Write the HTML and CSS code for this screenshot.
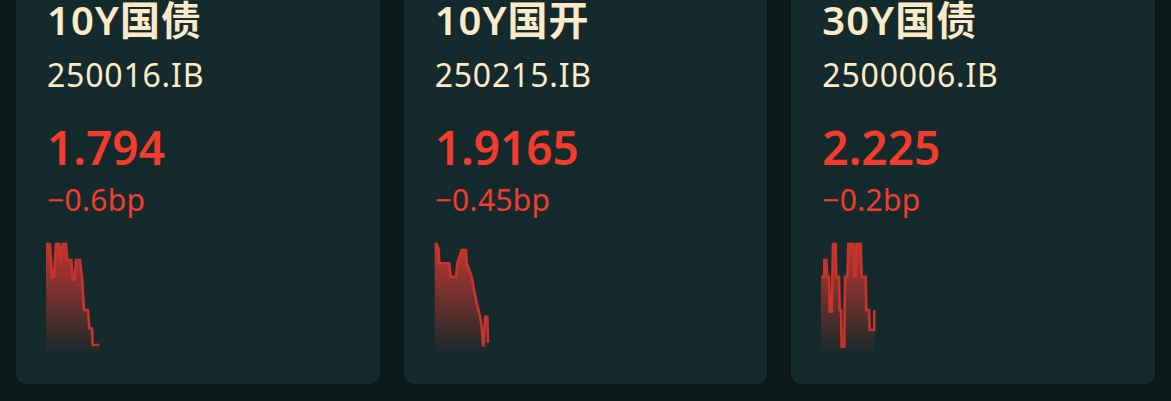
FILE: index.html
```html
<!DOCTYPE html>
<html lang="zh-CN">
<head>
    <meta charset="UTF-8">
    <meta name="viewport" content="width=device-width, initial-scale=1.0">
    <title>国债收益率</title>
    <link rel="stylesheet" href="styles.css">
</head>
<body>
    <div class="cards">
        <div class="card">
            <div class="bond-name">10Y国债</div>
            <div class="bond-code">250016.IB</div>
            <div class="bond-yield">1.794</div>
            <div class="bond-change">−0.6bp</div>
            <svg class="spark" width="56" height="115" viewBox="0 0 56 115">
                <defs>
                    <linearGradient id="fill1" x1="0" y1="0" x2="0" y2="1">
                        <stop offset="0" stop-color="#cc362d" stop-opacity="0.95"/>
                        <stop offset="1" stop-color="#cc362d" stop-opacity="0"/>
                    </linearGradient>
                </defs>
                <path fill="url(#fill1)" d="M0,115 L0,3 4,3 6,36 8,36 10,3 13.3,3 14.7,21 16.7,3 20,3 21.3,19 25.3,19 26.7,38.5 28.7,38.5 30,19 34,19 36,36 38,69 42,69 43.3,87.5 46,87.5 46.7,104 53.3,104 53.3,115 Z"/>
                <polyline class="spark-line" points="0,3 4,3 6,36 8,36 10,3 13.3,3 14.7,21 16.7,3 20,3 21.3,19 25.3,19 26.7,38.5 28.7,38.5 30,19 34,19 36,36 38,69 42,69 43.3,87.5 46,87.5 46.7,104 53.3,104"/>
            </svg>
        </div>

        <div class="card">
            <div class="bond-name">10Y国开</div>
            <div class="bond-code">250215.IB</div>
            <div class="bond-yield">1.9165</div>
            <div class="bond-change">−0.45bp</div>
            <svg class="spark" width="56" height="115" viewBox="0 0 56 115">
                <defs>
                    <linearGradient id="fill2" x1="0" y1="0" x2="0" y2="1">
                        <stop offset="0" stop-color="#cc362d" stop-opacity="0.95"/>
                        <stop offset="1" stop-color="#cc362d" stop-opacity="0"/>
                    </linearGradient>
                </defs>
                <path fill="url(#fill2)" d="M0.7,115 L0.7,3 2.7,3 4.7,9 5.3,22.3 15.3,22.3 16.7,35.7 22,35.7 23.3,22.3 27.7,9 32,9 32.7,22.3 35.3,29 37.7,35.7 40,49 42.7,62.3 46,75.7 47.7,85.7 49.3,105.7 51.3,75.7 53.3,75.7 54,102 54,115 Z"/>
                <polyline class="spark-line" points="0.7,3 2.7,3 4.7,9 5.3,22.3 15.3,22.3 16.7,35.7 22,35.7 23.3,22.3 27.7,9 32,9 32.7,22.3 35.3,29 37.7,35.7 40,49 42.7,62.3 46,75.7 47.7,85.7 49.3,105.7 51.3,75.7 53.3,75.7 54,102"/>
            </svg>
        </div>

        <div class="card">
            <div class="bond-name">30Y国债</div>
            <div class="bond-code">2500006.IB</div>
            <div class="bond-yield">2.225</div>
            <div class="bond-change">−0.2bp</div>
            <svg class="spark" width="56" height="115" viewBox="0 0 56 115">
                <defs>
                    <linearGradient id="fill3" x1="0" y1="0" x2="0" y2="1">
                        <stop offset="0" stop-color="#cc362d" stop-opacity="0.95"/>
                        <stop offset="1" stop-color="#cc362d" stop-opacity="0"/>
                    </linearGradient>
                </defs>
                <path fill="url(#fill3)" d="M0,115 L0,35.7 3.3,35.7 3.3,19 5.3,19 6.3,35.7 8,35.7 8.7,70.7 10.7,70.7 12,3 14.7,3 15.3,35.7 18,35.7 18.7,69 20,69 20.7,105.7 23.3,105.7 24,35.7 26.3,35.7 27.3,3 32.3,3 33.3,35.7 34.7,35.7 35.3,3 39.7,3 40.7,35.7 44.7,35.7 45.3,69 48,69 48.7,89 53.3,89 53.3,69 53.3,115 Z"/>
                <polyline class="spark-line" points="0,35.7 3.3,35.7 3.3,19 5.3,19 6.3,35.7 8,35.7 8.7,70.7 10.7,70.7 12,3 14.7,3 15.3,35.7 18,35.7 18.7,69 20,69 20.7,105.7 23.3,105.7 24,35.7 26.3,35.7 27.3,3 32.3,3 33.3,35.7 34.7,35.7 35.3,3 39.7,3 40.7,35.7 44.7,35.7 45.3,69 48,69 48.7,89 53.3,89 53.3,69"/>
            </svg>
        </div>
    </div>
</body>
</html>
```

FILE: styles.css
```css
body {
    margin: 0;
    background-color: #0a1817;
    font-family: 'Noto Sans', 'Noto Sans CJK SC', sans-serif;
    overflow: hidden;
}

/* page is scrolled a little, card tops sit above the window */
.cards {
    display: grid;
    grid-template-columns: repeat(3, 1fr);
    gap: 24px;
    padding: 0 16px;
    margin-top: -24px;
}

.card {
    background-color: #152a2c;
    border-radius: 10px;
    padding: 24px 31px 28px;
    display: flex;
    flex-direction: column;
    align-items: flex-start;
}

.bond-name {
    font-size: 40px;
    line-height: 40px;
    font-weight: 600;
    letter-spacing: 1px;
    color: #fdeac8;
}

.bond-code {
    margin-top: 19px;
    font-size: 32px;
    line-height: 32px;
    letter-spacing: 0.8px;
    color: #fdeac8;
}

.bond-yield {
    margin-top: 33px;
    font-size: 46px;
    line-height: 46px;
    font-weight: 600;
    color: #f33c2e;
}

.bond-change {
    margin-top: 15px;
    font-size: 30px;
    line-height: 30px;
    letter-spacing: 0.3px;
    color: #f33c2e;
}

.spark {
    display: block;
    margin-top: 26px;
    margin-left: -1px;
}

.spark-line {
    fill: none;
    stroke: #c9332b;
    stroke-width: 2.6;
}
```
